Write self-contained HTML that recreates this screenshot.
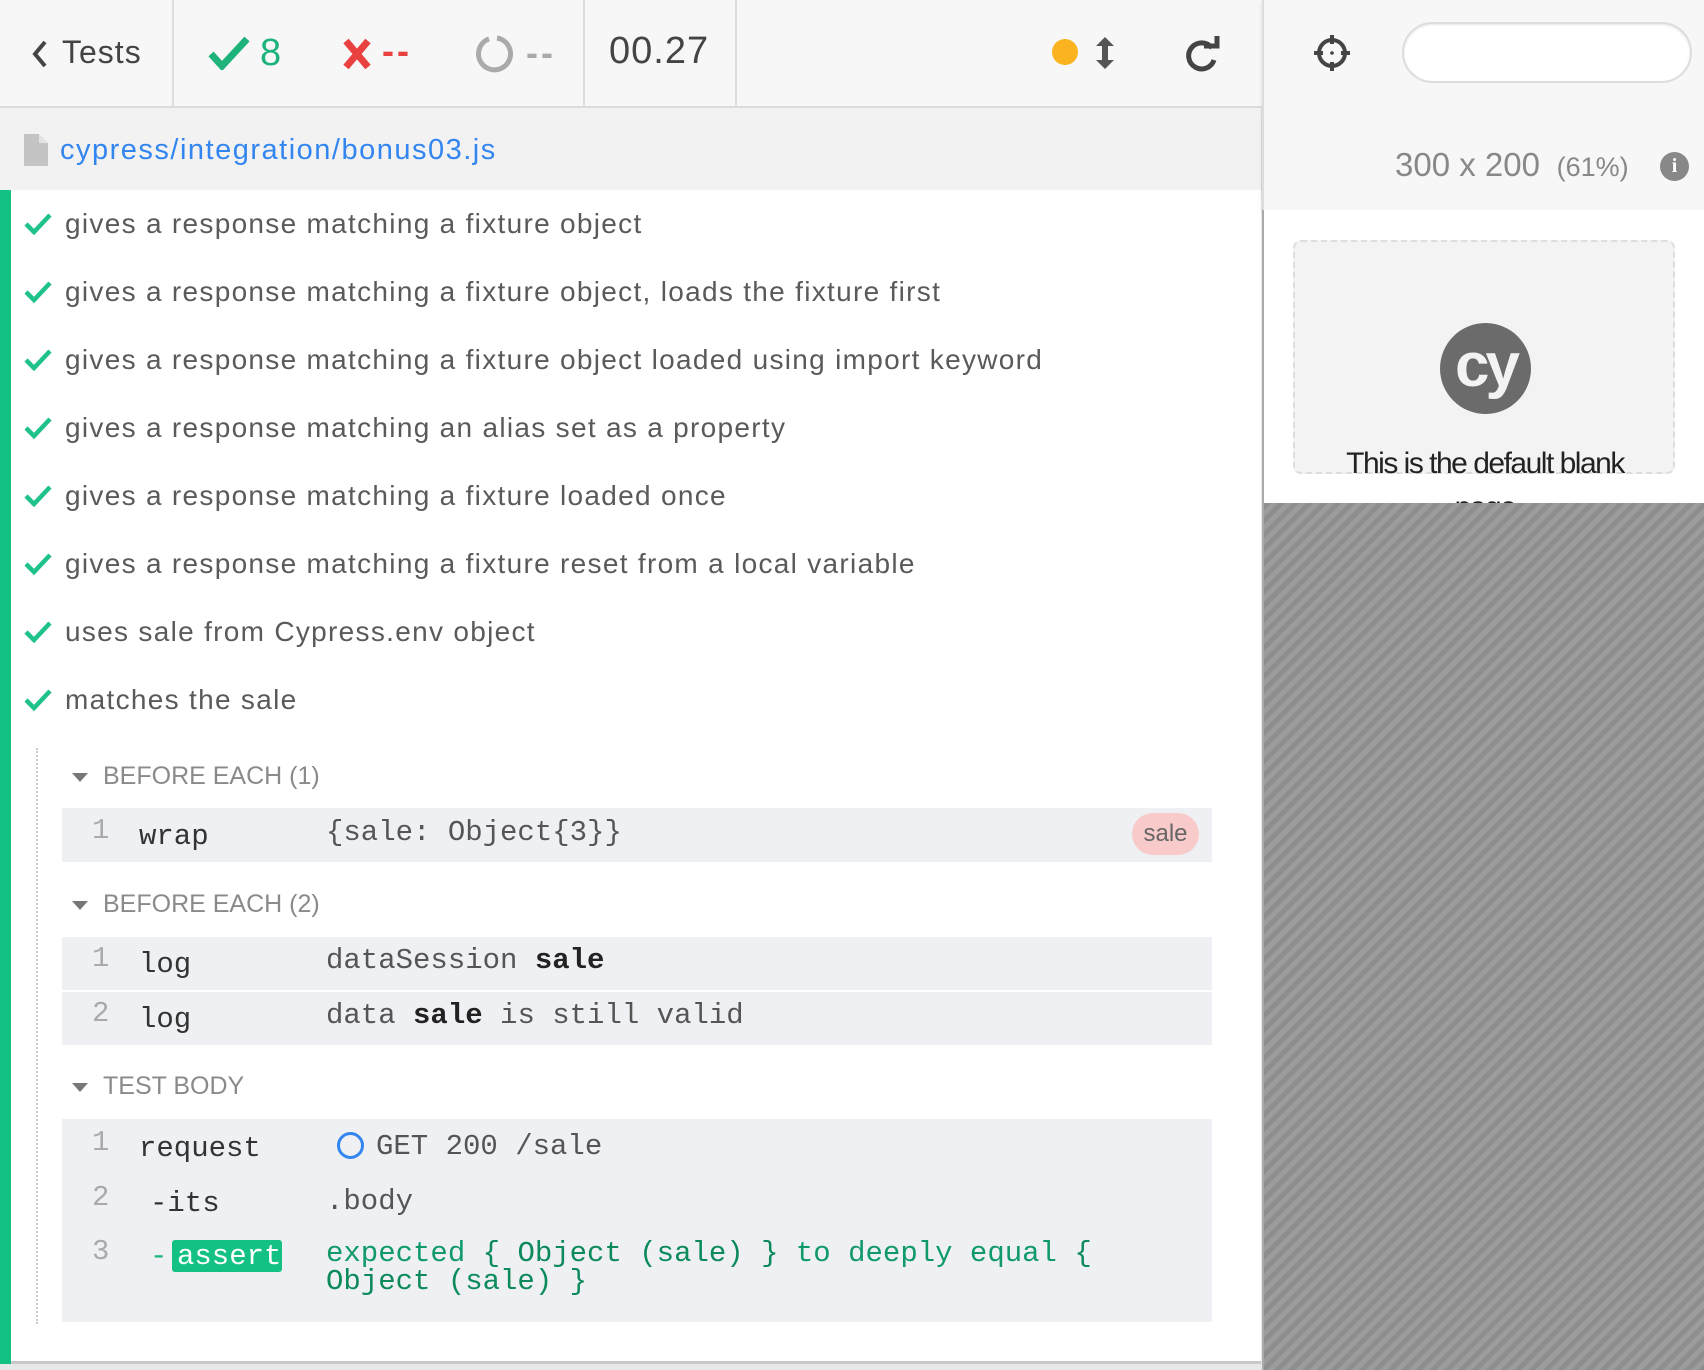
<!DOCTYPE html>
<html><head><meta charset="utf-8"><style>
*{margin:0;padding:0;box-sizing:border-box}
body{width:1704px;height:1370px;overflow:hidden;background:#e8e8e8;font-family:"Liberation Sans",sans-serif;position:relative}
.abs{position:absolute}
#hdr{left:0;top:0;width:1262px;height:108px;background:#f7f7f7;border-bottom:2px solid #ddd}
.sep{position:absolute;top:0;width:2px;height:108px;background:#ddd}
#file{left:0;top:108px;width:1261px;height:82px;background:#f2f2f2;box-shadow:0 4px 6px rgba(0,0,0,.12)}
#main{left:0;top:190px;width:1261px;height:1174px;background:#fff;border-bottom:3px solid #c9c9c9}
#bar{left:0;top:190px;width:11px;height:1174px;background:#13c283}
.t{position:absolute;left:65px;font-size:28px;color:#5a5a5a;line-height:34px;letter-spacing:1.3px}
.hook{position:absolute;left:103px;font-size:25px;color:#8a8a8a}
.tri{position:absolute;left:72px;width:0;height:0;border-left:8px solid transparent;border-right:8px solid transparent;border-top:9px solid #777}
.blk{position:absolute;left:62px;width:1150px;background:#eef0f3}
.m{position:absolute;font-family:"Liberation Mono",monospace;font-size:29px;line-height:30px;color:#555}
.n{color:#aaa;left:92px}
.nm{color:#333;left:139px}
#right{left:1262px;top:0;width:442px;height:210px;background:#f7f7f7;border-left:2px solid #ddd;box-shadow:0 2px 4px rgba(0,0,0,.1)}
</style></head><body>
<div id="hdr" class="abs">
  <div class="sep" style="left:172px"></div><div class="sep" style="left:583px"></div><div class="sep" style="left:735px"></div>
  <svg class="abs" style="left:30px;top:40px" width="20" height="28" viewBox="0 0 20 28"><path d="M15 2 L5 14 L15 26" stroke="#444" stroke-width="4" fill="none"/></svg>
  <div class="abs" style="left:62px;top:34px;font-size:32px;color:#444;letter-spacing:1px">Tests</div>
  <svg class="abs" style="left:208px;top:36px" width="42" height="34" viewBox="0 0 42 34"><path d="M3 18 L14 30 L39 3" stroke="#1fb37c" stroke-width="7" fill="none"/></svg>
  <div class="abs" style="left:260px;top:32px;font-size:38px;color:#1fb37c">8</div>
  <svg class="abs" style="left:342px;top:38px" width="30" height="32" viewBox="0 0 30 32"><path d="M4 3 L26 29 M26 3 L4 29" stroke="#e94040" stroke-width="7"/></svg>
  <div class="abs" style="left:382px;top:30px;font-size:36px;color:#e94040;font-weight:bold;letter-spacing:3px">--</div>
  <svg class="abs" style="left:474px;top:34px" width="40" height="40" viewBox="0 0 40 40"><path d="M23 4 A16 16 0 1 1 15 4.8" stroke="#aaa" stroke-width="5" fill="none"/></svg>
  <div class="abs" style="left:526px;top:32px;font-size:36px;color:#aaa;font-weight:bold;letter-spacing:3px">--</div>
  <div class="abs" style="left:609px;top:30px;font-size:38px;color:#444;letter-spacing:1px">00.27</div>
  <div class="abs" style="left:1052px;top:39px;width:26px;height:26px;border-radius:50%;background:#fbb420"></div>
  <svg class="abs" style="left:1094px;top:35px" width="22" height="36" viewBox="0 0 22 36"><path d="M11 2 L20 11 L2 11 Z M11 34 L20 25 L2 25 Z" fill="#555"/><rect x="8" y="9" width="6" height="18" fill="#555"/></svg>
  <svg class="abs" style="left:1184px;top:36px" width="36" height="36" viewBox="0 0 36 36"><path d="M28 12 A13 13 0 1 0 30 24" stroke="#444" stroke-width="5" fill="none"/><path d="M20 10 L33 10 L33 -1" stroke="#444" stroke-width="5" fill="none"/></svg>
</div>
<div id="file" class="abs">
  <svg class="abs" style="left:24px;top:26px" width="24" height="32" viewBox="0 0 24 32"><path d="M0 0 H15 L24 9 V32 H0 Z" fill="#c4c4c4"/><path d="M15 0 V9 H24" fill="#e3e3e3"/></svg>
  <div class="abs" style="left:60px;top:26px;font-size:29px;color:#3386f0;letter-spacing:1.5px">cypress/integration/bonus03.js</div>
</div>
<div id="main" class="abs"></div>
<div id="bar" class="abs"></div>
<svg class="abs" style="left:0;top:0" width="60" height="740">
<g stroke="#1fc28a" stroke-width="4.5" fill="none">
<path d="M26 224 l8 8 l16 -17"/><path d="M26 292 l8 8 l16 -17"/><path d="M26 360 l8 8 l16 -17"/><path d="M26 428 l8 8 l16 -17"/><path d="M26 496 l8 8 l16 -17"/><path d="M26 564 l8 8 l16 -17"/><path d="M26 632 l8 8 l16 -17"/><path d="M26 700 l8 8 l16 -17"/>
</g></svg>
<div class="t" style="top:207px">gives a response matching a fixture object</div>
<div class="t" style="top:275px">gives a response matching a fixture object, loads the fixture first</div>
<div class="t" style="top:343px">gives a response matching a fixture object loaded using import keyword</div>
<div class="t" style="top:411px">gives a response matching an alias set as a property</div>
<div class="t" style="top:479px">gives a response matching a fixture loaded once</div>
<div class="t" style="top:547px">gives a response matching a fixture reset from a local variable</div>
<div class="t" style="top:615px">uses sale from Cypress.env object</div>
<div class="t" style="top:683px">matches the sale</div>
<div class="abs" style="left:36px;top:748px;height:576px;border-left:2px dotted #ccc"></div>

<div class="tri" style="top:773px"></div><div class="hook" style="top:762px">BEFORE EACH (1)</div>
<div class="blk" style="top:808px;height:54px"></div>
<div class="m n" style="top:816px">1</div><div class="m nm" style="top:822px">wrap</div>
<div class="m" style="left:326px;top:818px">{sale: Object{3}}</div>
<div class="abs" style="left:1132px;top:813px;width:67px;height:42px;border-radius:21px;background:#f9caca;color:#666;font-size:24px;text-align:center;line-height:42px">sale</div>

<div class="tri" style="top:901px"></div><div class="hook" style="top:890px">BEFORE EACH (2)</div>
<div class="blk" style="top:937px;height:108px"></div>
<div class="abs" style="left:62px;top:990px;width:1150px;height:2px;background:#fff"></div>
<div class="m n" style="top:944px">1</div><div class="m nm" style="top:950px">log</div>
<div class="m" style="left:326px;top:946px">dataSession <b style="color:#222">sale</b></div>
<div class="m n" style="top:999px">2</div><div class="m nm" style="top:1005px">log</div>
<div class="m" style="left:326px;top:1001px">data <b style="color:#222">sale</b> is still valid</div>

<div class="tri" style="top:1083px"></div><div class="hook" style="top:1072px">TEST BODY</div>
<div class="blk" style="top:1119px;height:203px"></div>
<div class="m n" style="top:1128px">1</div><div class="m nm" style="top:1134px">request</div>
<div class="abs" style="left:337px;top:1132px;width:27px;height:27px;border-radius:50%;border:3px solid #3386f0"></div>
<div class="m" style="left:376px;top:1132px">GET 200 /sale</div>
<div class="m n" style="top:1183px">2</div><div class="m nm" style="top:1189px;left:150px">-its</div>
<div class="m" style="left:326px;top:1187px">.body</div>
<div class="m n" style="top:1237px">3</div><div class="m" style="left:150px;top:1242px;color:#1fb37c">-</div>
<div class="abs" style="left:172px;top:1240px;width:110px;height:32px;background:#13c283;border-radius:3px"></div>
<div class="m" style="left:177px;top:1242px;color:#fff">assert</div>
<div class="m" style="left:326px;top:1240px;color:#109a6a;line-height:28px">expected <span style="color:#0d8a5c">{ Object (sale) }</span> to deeply equal <span style="color:#0d8a5c">{</span><br><span style="color:#0d8a5c">Object (sale) }</span></div>

<div id="right" class="abs">
  <svg class="abs" style="left:49px;top:34px" width="38" height="38" viewBox="0 0 38 38"><circle cx="19" cy="19" r="13" stroke="#444" stroke-width="4" fill="none"/><path d="M19 1 V10 M19 28 V37 M1 19 H10 M28 19 H37" stroke="#444" stroke-width="4"/><circle cx="19" cy="19" r="1.8" fill="#444"/></svg>
  <div class="abs" style="left:138px;top:22px;width:290px;height:61px;border-radius:31px;background:#fff;border:2px solid #ddd;box-shadow:inset 0 1px 2px rgba(0,0,0,.1)"></div>
  <div class="abs" style="left:131px;top:146px;font-size:33px;color:#888">300 x 200 <span style="font-size:27px">&nbsp;(61%)</span></div>
  <div class="abs" style="left:396px;top:152px;width:29px;height:29px;border-radius:50%;background:#888;color:#fff;font-size:20px;font-weight:bold;text-align:center;line-height:29px;font-family:'Liberation Serif',serif">i</div>
</div>
<div class="abs" style="left:1262px;top:210px;width:442px;height:293px;background:#fff;border-left:2px solid #aaa;overflow:hidden">
  <div class="abs" style="left:29px;top:30px;width:382px;height:234px;border:2px dashed #ddd;border-radius:8px;background:#f3f3f3"></div>
  <div class="abs" style="left:176px;top:113px;width:91px;height:91px;border-radius:50%;background:#6b6b6b;color:#f3f3f3;font-size:62px;font-weight:bold;text-align:center;line-height:86px;letter-spacing:-4px">cy</div>
  <div class="abs" style="left:0;top:232px;width:442px;text-align:center;font-size:30px;color:#222;line-height:44px;letter-spacing:-1.5px">This is the default blank<br>page</div>
</div>
<div class="abs" style="left:1262px;top:503px;width:442px;height:867px;border-left:2px solid #aaa;background:repeating-linear-gradient(135deg,#8e8e8e 0 5px,#9c9c9c 5px 10px)"></div>
</body></html>
